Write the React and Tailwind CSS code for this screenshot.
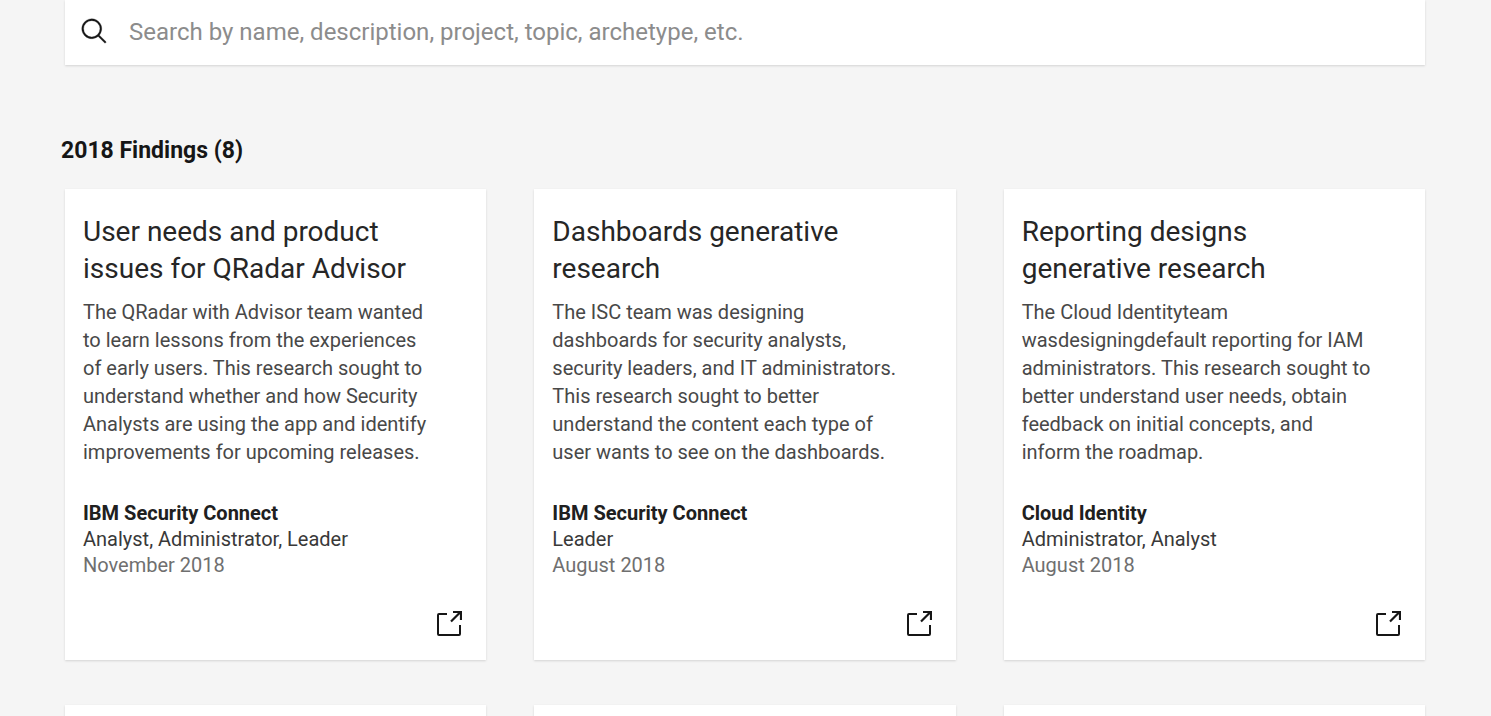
const findings = [
  {
    title: ['User needs and product', 'issues for QRadar Advisor'],
    body: [
      'The QRadar with Advisor team wanted',
      'to learn lessons from the experiences',
      'of early users. This research sought to',
      'understand whether and how Security',
      'Analysts are using the app and identify',
      'improvements for upcoming releases.',
    ],
    project: 'IBM Security Connect',
    roles: 'Analyst, Administrator, Leader',
    date: 'November 2018',
  },
  {
    title: ['Dashboards generative', 'research'],
    body: [
      'The ISC team was designing',
      'dashboards for security analysts,',
      'security leaders, and IT administrators.',
      'This research sought to better',
      'understand the content each type of',
      'user wants to see on the dashboards.',
    ],
    project: 'IBM Security Connect',
    roles: 'Leader',
    date: 'August 2018',
  },
  {
    title: ['Reporting designs', 'generative research'],
    body: [
      'The Cloud Identityteam',
      'wasdesigningdefault reporting for IAM',
      'administrators. This research sought to',
      'better understand user needs, obtain',
      'feedback on initial concepts, and',
      'inform the roadmap.',
    ],
    project: 'Cloud Identity',
    roles: 'Administrator, Analyst',
    date: 'August 2018',
  },
];

function SearchIcon() {
  return (
    <svg viewBox="0 0 32 32" className="size-[29px] shrink-0" fill="#161616" aria-hidden="true">
      <path d="M29 27.586l-7.552-7.552a11.018 11.018 0 1 0-1.414 1.414L27.586 29ZM4 13a9 9 0 1 1 9 9 9.01 9.01 0 0 1-9-9Z" stroke="#161616" strokeWidth="0.3" />
    </svg>
  );
}

function LaunchIcon() {
  return (
    <svg viewBox="0 0 26 26" className="size-[26px]" fill="none" stroke="#161616" strokeWidth="2" aria-hidden="true">
      <path d="M11 4H3a1 1 0 0 0-1 1v19a1 1 0 0 0 1 1h20a1 1 0 0 0 1-1V15" />
      <path d="M15 11.5L24.5 2M17 2H25V10" strokeWidth="2.2" />
    </svg>
  );
}

function Lines({ lines }) {
  return lines.map((line) => (
    <span key={line} className="block whitespace-nowrap">
      {line}{' '}
    </span>
  ));
}

function FindingCard({ item }) {
  return (
    <article className="flex h-[471px] flex-col bg-white px-[18px] pt-6 pb-6 shadow-[0_1px_2px_#d4d4d4]">
      <h3 className="text-[28px] leading-[37px] text-[#262626]">
        <Lines lines={item.title} />
      </h3>
      <p className="mt-[11px] text-[20px] leading-[28px] text-[#484848]">
        <Lines lines={item.body} />
      </p>
      <div className="mt-[34px] text-[20px] leading-[26px]">
        <p className="font-bold text-[#202020]">{item.project}</p>
        <p className="text-[#393939]">{item.roles}</p>
        <p className="text-[#6f6f6f]">{item.date}</p>
      </div>
      <a href="#finding" aria-label={`Open ${item.title.join(' ')}`} className="mt-auto mr-1.5 self-end">
        <LaunchIcon />
      </a>
    </article>
  );
}

export default function App() {
  return (
    <main className="h-screen overflow-hidden bg-[#f5f5f5] pr-[66px] pl-[61px] font-['Roboto','Liberation_Sans',sans-serif]">
      <label className="ml-1 flex h-[65px] items-center gap-5 bg-white pb-[2px] pl-[15px] shadow-[0_1px_2px_#d4d4d4]">
        <SearchIcon />
        <input
          type="search"
          aria-label="Search findings"
          placeholder="Search by name, description, project, topic, archetype, etc."
          className="h-full min-w-0 flex-1 bg-transparent text-[24px] text-[#262626] outline-none placeholder:text-[#8c8c8c]"
        />
      </label>
      <h2 className="mt-[71px] text-[23px] leading-[30px] font-bold text-[#161616]">2018 Findings (8)</h2>
      <section className="mt-[23px] ml-1 grid grid-cols-3 gap-x-12 gap-y-[45px]">
        {findings.map((item) => (
          <FindingCard key={item.title[0]} item={item} />
        ))}
        <article className="h-[471px] bg-white shadow-[0_1px_2px_#d4d4d4]" />
        <article className="h-[471px] bg-white shadow-[0_1px_2px_#d4d4d4]" />
        <article className="h-[471px] bg-white shadow-[0_1px_2px_#d4d4d4]" />
      </section>
    </main>
  );
}
